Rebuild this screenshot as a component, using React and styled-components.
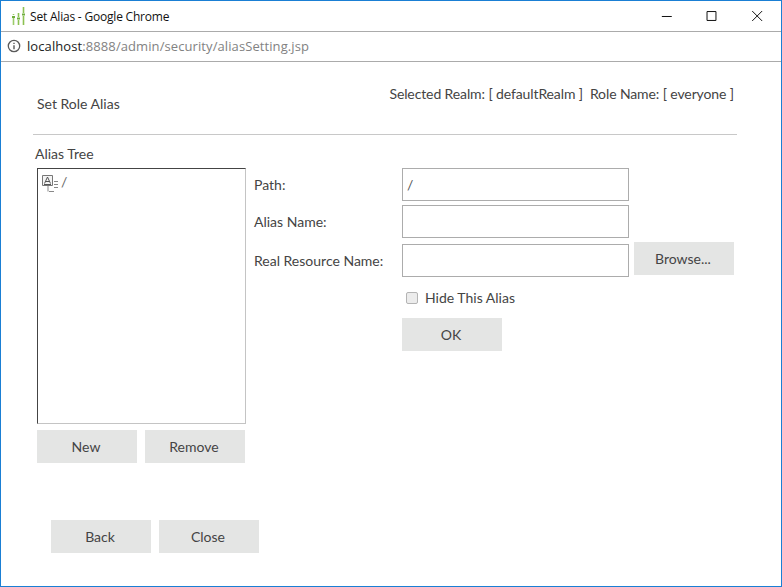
import React from 'react';
import styled, { createGlobalStyle } from 'styled-components';

const Global = createGlobalStyle`
  html, body { margin: 0; padding: 0; background: #fff; }
  * { box-sizing: border-box; }
`;

function App() {
  return (
    <Window>
      <Global />
      <TitleBar>
        <ChartIcon />
        <WindowTitle>Set Alias - Google Chrome</WindowTitle>
        <Controls>
          <svg width="142" height="30" viewBox="0 0 142 30">
            <path d="M22 15.5h10" stroke="#111" fill="none" />
            <path d="M67.5 10.5h9v9h-9z" stroke="#111" fill="none" />
            <path d="M113 10l10 10M123 10l-10 10" stroke="#111" fill="none" />
          </svg>
        </Controls>
      </TitleBar>
      <AddressBar>
        <InfoIcon />
        <Url>
          localhost<UrlRest>:8888/admin/security/aliasSetting.jsp</UrlRest>
        </Url>
      </AddressBar>
      <Page>
        <Header>
          <PageTitle>Set Role Alias</PageTitle>
          <RealmInfo>Selected Realm: [ defaultRealm ]&nbsp; Role Name: [ everyone ]</RealmInfo>
        </Header>
        <Divider />
        <TreeLabel>Alias Tree</TreeLabel>
        <Main>
          <TreeColumn>
            <TreeBox>
              <AliasIcon />
              <TreeNode>/</TreeNode>
            </TreeBox>
            <ButtonRow>
              <Button>New</Button>
              <Button>Remove</Button>
            </ButtonRow>
          </TreeColumn>
          <Form>
            <Row>
              <Label>Path:</Label>
              <Input defaultValue="/" />
            </Row>
            <Row $gap={6}>
              <Label>Alias Name:</Label>
              <Input />
            </Row>
            <Row>
              <Label>Real Resource Name:</Label>
              <Input />
              <BrowseButton>Browse...</BrowseButton>
            </Row>
            <CheckRow>
              <Checkbox type="checkbox" />
              <CheckLabel>Hide This Alias</CheckLabel>
            </CheckRow>
            <OkButton>OK</OkButton>
          </Form>
        </Main>
        <Footer>
          <Button>Back</Button>
          <Button>Close</Button>
        </Footer>
      </Page>
    </Window>
  );
}

function ChartIcon() {
  return (
    <TitleIcon width="16" height="20" viewBox="0 0 16 20">
      <g stroke="#8cc152" strokeWidth="1.6" fill="none">
        <path d="M2.5 8v1M2.5 12v7" stroke="#9ccc6a" />
        <path d="M7.5 7v4M7.5 14v5" />
        <path d="M12.5 1v6M12.5 10v9" />
      </g>
      <g fill="#6fae3c">
        <rect x="1" y="10" width="3" height="2" />
        <rect x="6" y="11.5" width="3" height="2" />
        <rect x="11" y="7.5" width="3" height="2" />
      </g>
    </TitleIcon>
  );
}

function InfoIcon() {
  return (
    <InfoSvg width="14" height="14" viewBox="0 0 14 14">
      <circle cx="7" cy="7" r="5.7" fill="none" stroke="#5a5a5a" strokeWidth="1.3" />
      <path d="M7 6.2v4M7 3.7v1.4" stroke="#5a5a5a" strokeWidth="1.4" fill="none" />
    </InfoSvg>
  );
}

function AliasIcon() {
  return (
    <svg width="19" height="20" viewBox="0 0 19 20">
      <path d="M1.5 1.5h10v10h-10z" fill="#f4f4f4" stroke="#777" />
      <path d="M3.5 9.5L6.5 3l3 6.5M4.5 7.5h4M3 10.5h7" fill="none" stroke="#555" />
      <path d="M13 7.5h4M13 10.5h4M13 13.5h4M7 12v5.5M8 17.5h5" fill="none" stroke="#888" />
    </svg>
  );
}

const Window = styled.div`
  width: 782px;
  height: 587px;
  border: 1px solid #1a7fd4;
  background: #fff;
  overflow: hidden;
  display: flex;
  flex-direction: column;
  font-family: Lato, sans-serif;
  font-size: 14px;
  color: #444;
`;

const TitleBar = styled.div`
  height: 31px;
  flex: none;
  display: flex;
  align-items: center;
  border-bottom: 1px solid #ababab;
  padding-left: 10px;
`;

const TitleIcon = styled.svg`
  flex: none;
  margin-right: 3px;
`;

const WindowTitle = styled.span`
  font-family: 'Open Sans', sans-serif;
  font-size: 12px;
  letter-spacing: -0.2px;
  color: #111;
`;

const Controls = styled.div`
  margin-left: auto;
  width: 141px;
  height: 30px;
  display: flex;
`;

const AddressBar = styled.div`
  height: 30px;
  flex: none;
  display: flex;
  align-items: center;
  border-bottom: 1px solid #ababab;
  padding: 0 0 2px 6px;
`;

const InfoSvg = styled.svg`
  flex: none;
  margin-right: 6px;
`;

const Url = styled.span`
  font-family: 'Open Sans', sans-serif;
  font-size: 13px;
  letter-spacing: 0.09px;
  color: #222;
`;

const UrlRest = styled.span`
  color: #828282;
`;

const Page = styled.div`
  flex: 1;
  display: flex;
  flex-direction: column;
  padding: 0 0 0 32px;
`;

const Header = styled.div`
  height: 72px;
  display: flex;
  justify-content: space-between;
  padding: 23px 47px 0 4px;
`;

const PageTitle = styled.div`
  line-height: 18px;
  margin-top: 10px;
`;

const RealmInfo = styled.div`
  line-height: 18px;
  letter-spacing: -0.11px;
`;

const Divider = styled.div`
  width: 704px;
  height: 1px;
  background: #c8c8c8;
`;

const TreeLabel = styled.div`
  margin: 10px 0 5px 2px;
  line-height: 18px;
`;

const Main = styled.div`
  display: flex;
`;

const TreeColumn = styled.div`
  margin-left: 4px;
  width: 209px;
  flex: none;
`;

const TreeBox = styled.div`
  height: 256px;
  border: 1px solid #c4c4c4;
  border-top-color: #444;
  border-left-color: #444;
  padding: 5px 3px;
  display: flex;
  align-items: flex-start;
`;

const TreeNode = styled.span`
  line-height: 16px;
  margin-left: 1px;
  color: #666;
`;

const ButtonRow = styled.div`
  display: flex;
  gap: 8px;
  margin-top: 6px;
`;

const Button = styled.button`
  width: 100px;
  height: 33px;
  flex: none;
  padding: 0 2px 0 0;
  border: none;
  background: #e4e5e4;
  font-family: Lato, sans-serif;
  font-size: 14px;
  color: #444;
`;

const Form = styled.div`
  margin-left: 8px;
  display: flex;
  flex-direction: column;
`;

const Row = styled.div`
  display: flex;
  align-items: flex-start;
  margin-bottom: ${(p) => p.$gap ?? 4}px;
`;

const Label = styled.label`
  width: 148px;
  flex: none;
  line-height: 33px;
`;

const Input = styled.input`
  width: 227px;
  height: 33px;
  border: 1px solid #acacac;
  padding: 0 4px;
  outline: none;
  background: #fff;
  font-family: Lato, sans-serif;
  font-size: 14px;
  color: #555;
`;

const BrowseButton = styled(Button)`
  margin: -2px 0 0 5px;
`;

const CheckRow = styled.div`
  display: flex;
  align-items: center;
  height: 18px;
  margin: 8px 0 0 152px;
`;

const Checkbox = styled.input`
  width: 12px;
  height: 12px;
  margin: 0 7px 0 0;
  appearance: none;
  background: #ececec;
  border: 1px solid #b4b4b4;
  border-radius: 2px;
`;

const CheckLabel = styled.span`
  line-height: 18px;
`;

const OkButton = styled(Button)`
  margin: 11px 0 0 148px;
`;

const Footer = styled.div`
  margin: 57px 0 0 18px;
  display: flex;
  gap: 8px;
`;

export default App;
